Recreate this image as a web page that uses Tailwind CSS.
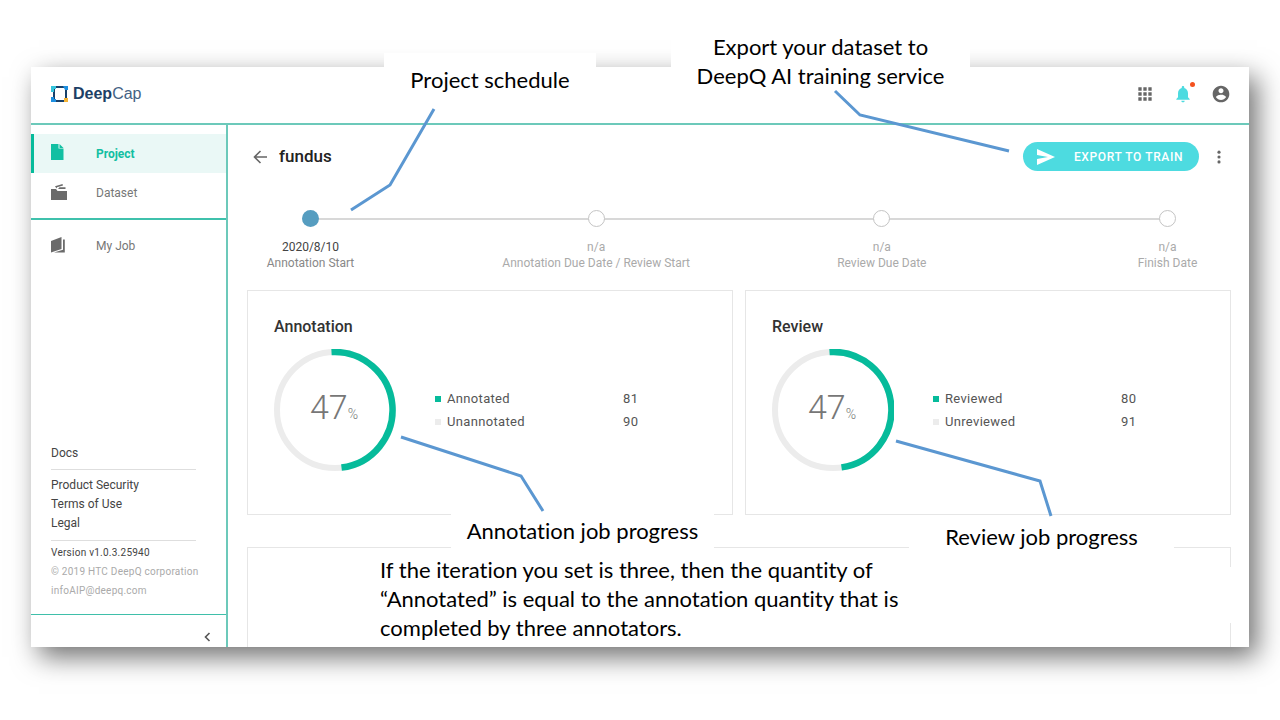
<!DOCTYPE html>
<html lang="en">
<head>
<meta charset="utf-8">
<meta name="viewport" content="width=device-width, initial-scale=1">
<title>DeepCap – fundus</title>
<script src="https://cdn.jsdelivr.net/npm/@tailwindcss/browser@4"></script>
</head>
<body class="bg-white font-['Roboto',sans-serif] text-[#555]">
<div class="relative min-h-screen overflow-hidden px-[31px] pt-[67px] pb-[73px]">
  <div class="flex flex-col bg-white shadow-[8px_10px_25px_rgba(0,0,0,0.56)]">
    <header class="flex h-[58px] items-center justify-between border-b-2 border-[#6cc9ba] pr-[18px] pb-0.5 pl-5">
      <a href="#" class="flex items-center gap-1 font-['Liberation_Sans',sans-serif] text-[16px] text-[#1d3f66]" aria-label="DeepCap">
        <svg class="size-[18px]" viewBox="0 0 18 18"><path d="M3 2h12v14H3z" fill="none" stroke="#17406b" stroke-width="2"/><path d="M0 1h5v3H3v3H0z" fill="#35c5dc"/><path d="M12 1h5v4h-3z" fill="#1d8fe0"/><path d="M0 12h3v2h2v3H0z" fill="#1d8fe0"/><path d="M13 13h4v4h-4z" fill="#f5b335"/></svg>
        <span><b>Deep</b><span class="text-[#446284]">Cap</span></span>
      </a>
      <div class="flex items-center gap-[18px] text-[#666]">
        <button aria-label="Apps"><svg class="size-5" viewBox="0 0 24 24" fill="currentColor"><path d="M4 8h4V4H4v4zm6 12h4v-4h-4v4zm-6 0h4v-4H4v4zm0-6h4v-4H4v4zm6 0h4v-4h-4v4zm6-10v4h4V4h-4zm-6 4h4V4h-4v4zm6 6h4v-4h-4v4zm0 6h4v-4h-4v4z"/></svg></button>
        <button aria-label="Notifications" class="relative text-[#4ddbe0]"><svg class="size-5" viewBox="0 0 24 24" fill="currentColor"><path d="M12 22c1.1 0 2-.9 2-2h-4c0 1.1.9 2 2 2zm6-6v-5c0-3.070-1.640-5.640-4.500-6.320V4c0-.830-.670-1.500-1.500-1.500s-1.500.670-1.500 1.500v.680C7.630 5.360 6 7.920 6 11v5l-2 2v1h16v-1l-2-2z"/></svg><span class="absolute -top-0.5 -right-0.5 size-[5px] rounded-full bg-[#f4511e]"></span></button>
        <button aria-label="Account"><svg class="size-5" viewBox="0 0 24 24" fill="currentColor"><path d="M12 2C6.480 2 2 6.480 2 12s4.480 10 10 10 10-4.480 10-10S17.520 2 12 2zm0 3c1.660 0 3 1.340 3 3s-1.340 3-3 3-3-1.340-3-3 1.340-3 3-3zm0 14.200c-2.500 0-4.710-1.280-6-3.220.030-1.990 4-3.080 6-3.080 1.990 0 5.970 1.090 6 3.080-1.290 1.940-3.500 3.220-6 3.220z"/></svg></button>
      </div>
    </header>
    <div class="flex">
      <aside class="flex w-[197px] shrink-0 flex-col border-r-2 border-[#6cc9ba]">
        <nav class="flex flex-col pt-[9px] text-[12px] text-[#777]">
          <a href="#" class="flex h-[39px] items-center border-l-3 border-[#06bb9b] bg-[#eaf8f6] pl-[17px] font-bold text-[#12bfa2]">
            <svg class="mr-8 mb-1 h-4 w-[13px]" viewBox="0 0 13 16" fill="currentColor"><path d="M0 0h7.500v4.500H12.500V16H0z"/><path d="M8.500 0 12.500 4H8.500z"/></svg>Project</a>
          <a href="#" class="flex h-[39px] items-center pl-5">
            <svg class="mr-7 mb-0.5 h-4 w-[17px]" viewBox="0 0 17 16" fill="#6b6b6b"><path d="M0 5h5l1.500 2H16v9H0z"/><path d="M4 2.300 11.500 0l.5 1.500-6 1.800L5.500 4.500z"/><path d="M7 5 8.500 3.300H14.500V5z"/></svg>Dataset</a>
          <a href="#" class="mt-[6px] flex h-[53px] items-center border-t-2 border-[#3fc1ac] pl-5">
            <svg class="mr-[31px] mb-0.5 h-4 w-[14px]" viewBox="0 0 14 16" fill="#6b6b6b"><path d="M0 4 10.500 0v12L0 15.500z"/><path d="M12 2.500h1.800v13H3l9-2.800z"/></svg>My Job</a>
        </nav>
        <div class="mt-[173px] pr-[30px] pb-[13px] pl-5 text-[12px] leading-[19px] text-[#444]">
          <p class="border-b border-[#dedede] pb-[6px]">Docs</p>
          <ul class="border-b border-[#dedede] pt-[6px] pb-[7px]">
            <li><a href="#">Product Security</a></li>
            <li><a href="#">Terms of Use</a></li>
            <li><a href="#">Legal</a></li>
          </ul>
          <div class="pt-[2px] text-[10px] tracking-wide whitespace-nowrap text-[#aaa]">
            <p class="text-[#444]">Version v1.0.3.25940</p>
            <p>© 2019 HTC DeepQ corporation</p>
            <p class="mb-px"><a href="#">infoAIP@deepq.com</a></p>
          </div>
        </div>
        <div class="flex h-[33px] items-center justify-end border-t border-[#3fbfaa] pt-[11px] pr-[15px]">
          <button aria-label="Collapse sidebar"><svg class="h-[10px] w-[7px]" viewBox="0 0 7 10" fill="none" stroke="#555" stroke-width="1.600"><path d="M5.500 1 1.500 5l4 4"/></svg></button>
        </div>
      </aside>
      <main class="flex min-w-0 flex-1 flex-col pr-[18px] pl-[19px]">
        <div class="flex items-center pt-[17px] pr-[3px] pl-[6px]">
          <button aria-label="Back"><svg class="size-[14px]" viewBox="0 0 14 14" fill="none" stroke="#666" stroke-width="1.600"><path d="M14 7H1.500M7.500 1l-6 6 6 6"/></svg></button>
          <h1 class="ml-3 flex-1 text-[17px] font-medium text-[#222]">fundus</h1>
          <button class="flex h-[29px] w-[176px] items-center justify-between rounded-full bg-[#4ddbe0] pr-4 pl-[14px] text-[12px] font-medium tracking-wider text-white"><svg class="h-4 w-[18px]" viewBox="0 0 18 16" fill="currentColor"><path d="M0 0 18 8 0 16V10l11-2L0 6z"/></svg>EXPORT TO TRAIN</button>
          <button aria-label="More" class="ml-[11px]"><svg class="size-[18px]" viewBox="0 0 24 24" fill="#666"><circle cx="12" cy="5.500" r="2.100"/><circle cx="12" cy="12" r="2.100"/><circle cx="12" cy="18.500" r="2.100"/></svg></button>
        </div>
        <ol class="mt-[39px] flex h-[80px] items-start justify-between bg-[linear-gradient(#d8d8d8,#d8d8d8)] bg-[length:calc(100%-126px)_2px] bg-[position:63px_8px] bg-no-repeat px-[55px] text-[12px] leading-4 whitespace-nowrap text-[#aaa]">
          <li class="flex w-[17px] flex-col items-center"><span class="mb-3 size-[17px] rounded-full bg-[#569dc0]"></span><span class="text-[#444]">2020/8/10</span><span class="text-[#888]">Annotation Start</span></li>
          <li class="flex w-[17px] flex-col items-center"><span class="mb-3 size-[17px] rounded-full border border-[#c4c4c4] bg-white"></span><span>n/a</span><span>Annotation Due Date / Review Start</span></li>
          <li class="flex w-[17px] flex-col items-center"><span class="mb-3 size-[17px] rounded-full border border-[#c4c4c4] bg-white"></span><span>n/a</span><span>Review Due Date</span></li>
          <li class="flex w-[17px] flex-col items-center"><span class="mb-3 size-[17px] rounded-full border border-[#c4c4c4] bg-white"></span><span>n/a</span><span>Finish Date</span></li>
        </ol>
        <div class="grid grid-cols-2 gap-3">
          <section class="h-[225px] border border-[#e6e6e6] pt-6 pl-[26px]">
            <h2 class="text-[16px] font-medium text-[#333]">Annotation</h2>
            <div class="mt-[10px] flex items-center gap-[39px]">
              <div class="relative flex size-[122px] items-center justify-center">
                <svg class="absolute inset-0 size-full" viewBox="0 0 122 122" fill="none"><circle cx="61" cy="61" r="58" stroke="#ececec" stroke-width="6"/><path d="M57.500 3.100A58 58 0 0 1 67.500 118.600" stroke="#06bb9b" stroke-width="6.500"/></svg>
                <p class="relative flex items-baseline pr-0.5 pb-[6px] text-[14px] font-light text-[#777]"><span class="text-[34px]">47</span>%</p>
              </div>
              <table class="w-[204px] text-left text-[13px] leading-[23px] tracking-wide">
                <tr><th scope="row" class="flex items-center gap-[6px] font-normal"><i class="size-[6px] bg-[#06bb9b]"></i>Annotated</th><td class="w-4">81</td></tr>
                <tr><th scope="row" class="flex items-center gap-[6px] font-normal"><i class="size-[6px] bg-[#ececec]"></i>Unannotated</th><td>90</td></tr>
              </table>
            </div>
          </section>
          <section class="h-[225px] border border-[#e6e6e6] pt-6 pl-[26px]">
            <h2 class="text-[16px] font-medium text-[#333]">Review</h2>
            <div class="mt-[10px] flex items-center gap-[39px]">
              <div class="relative flex size-[122px] items-center justify-center">
                <svg class="absolute inset-0 size-full" viewBox="0 0 122 122" fill="none"><circle cx="61" cy="61" r="58" stroke="#ececec" stroke-width="6"/><path d="M57.500 3.100A58 58 0 0 1 69.500 118.400" stroke="#06bb9b" stroke-width="6.500"/></svg>
                <p class="relative flex items-baseline pr-0.5 pb-[6px] text-[14px] font-light text-[#777]"><span class="text-[34px]">47</span>%</p>
              </div>
              <table class="w-[204px] text-left text-[13px] leading-[23px] tracking-wide">
                <tr><th scope="row" class="flex items-center gap-[6px] font-normal"><i class="size-[6px] bg-[#06bb9b]"></i>Reviewed</th><td class="w-4">80</td></tr>
                <tr><th scope="row" class="flex items-center gap-[6px] font-normal"><i class="size-[6px] bg-[#ececec]"></i>Unreviewed</th><td>91</td></tr>
              </table>
            </div>
          </section>
        </div>
        <div class="mt-8 flex-1 border border-b-0 border-[#e6e6e6]"></div>
      </main>
    </div>
  </div>

  <!-- Callouts laid over the dashboard -->
  <div class="font-['Lato',sans-serif] text-[22px] leading-[29px] text-black [font-variant-ligatures:none]">
    <p class="absolute top-[53px] left-[384px] flex h-14 w-[212px] items-center justify-center bg-white pb-1">Project schedule</p>
    <p class="absolute top-[32px] left-[671px] w-[299px] bg-white text-center">Export your dataset to<br>DeepQ AI training service</p>
    <p class="absolute top-[511px] left-[451px] flex h-[42px] w-[263px] items-center justify-center bg-white pb-1">Annotation job progress</p>
    <p class="absolute top-[515px] left-[909px] flex h-[46px] w-[265px] items-center justify-center bg-white pb-1">Review job progress</p>
    <p class="absolute top-[555px] left-[366px] h-[89px] w-[530px] bg-white pl-[14px] whitespace-nowrap">If the iteration you set is three, then the quantity of<br>“Annotated” is equal to the annotation quantity that is<br>completed by three annotators.</p>
    <span class="absolute top-[567px] left-[1220px] h-14 w-5 bg-white"></span>
  </div>
  <svg class="pointer-events-none absolute top-0 left-0 h-[720px] w-[1280px]" viewBox="0 0 1280 720" fill="none" stroke="#5b97d1" stroke-width="3" aria-hidden="true">
    <path d="M434 109 390 185 351 210"/><path d="M835 91 860 115 1009 151"/><path d="M401 437 521 476 543 511"/><path d="M896 441 1040 481 1051 516"/>
  </svg>
</div>
</body>
</html>
